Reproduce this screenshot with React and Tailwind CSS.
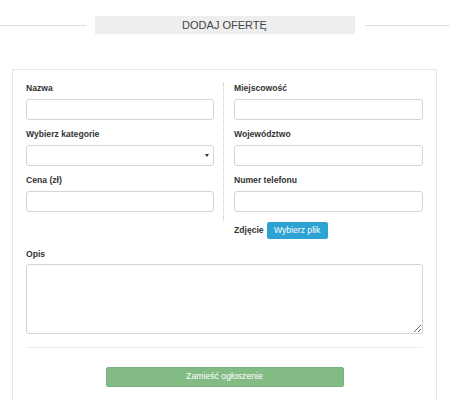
import { useState } from 'react';

function Field({ label, children, className = '' }) {
  return (
    <div className={`flex flex-col ${className}`}>
      <label className="h-[16px] leading-[16px] text-[8.6px] font-bold text-[#333] mb-[3px]">{label}</label>
      {children}
    </div>
  );
}

const inputCls = 'block h-[21px] w-full rounded-[3px] border border-[#d4d4d4] bg-white px-2 text-[9px] outline-none';

export default function App() {
  const [cat, setCat] = useState('');

  return (
    <div className="min-h-[400px] bg-white pt-[16px] font-['Liberation_Sans',Arial,sans-serif]">
      {/* Header */}
      <div className="flex items-center gap-[9px]">
        <div className="h-px flex-1 bg-[#dddddd]" />
        <div className="flex h-[18px] w-[260px] items-center justify-center bg-[#eeeeee] text-[11px] text-[#444]">
          DODAJ OFERTĘ
        </div>
        <div className="ml-[1px] h-px flex-1 bg-[#dddddd]" />
      </div>

      {/* Form card */}
      <div className="ml-[12px] mt-[35px] w-[425px] border border-[#e6e6e6] px-[13px] pt-[10px] pb-[20px]">
        <div className="flex">
          <div className="w-[188px]">
            <Field label="Nazwa" className="mb-[6px]">
              <input className={inputCls} />
            </Field>
            <Field label="Wybierz kategorie" className="mb-[6px]">
              <div className="relative h-[21px]">
                <select
                  value={cat}
                  onChange={(e) => setCat(e.target.value)}
                  className={`${inputCls} appearance-none`}
                >
                  <option value=""></option>
                </select>
                <span className="pointer-events-none absolute right-[5px] top-[9px] h-0 w-0 border-x-[2px] border-t-[3px] border-x-transparent border-t-[#333]" />
              </div>
            </Field>
            <Field label="Cena (zł)">
              <input className={inputCls} />
            </Field>
          </div>

          <div className="ml-[9px] mt-[3px] mb-[18px] w-0 border-l border-dotted border-[#c8c8c8]" />

          <div className="flex-1 pl-[10px]">
            <Field label="Miejscowość" className="mb-[6px]">
              <input className={inputCls} />
            </Field>
            <Field label="Województwo" className="mb-[6px]">
              <input className={inputCls} />
            </Field>
            <Field label="Numer telefonu">
              <input className={inputCls} />
            </Field>
            <div className="mt-[10px] flex items-center gap-[3px]">
              <span className="text-[8.6px] font-bold text-[#333]">Zdjęcie</span>
              <button className="h-[17px] w-[61px] rounded-[2px] bg-[#2da3d3] text-[8.6px] text-white">
                Wybierz plik
              </button>
            </div>
          </div>
        </div>

        <Field label="Opis" className="mt-[7px]">
          <textarea className="-mt-[1px] block h-[70px] w-full rounded-[3px] border border-[#d4d4d4] bg-white p-1 text-[9px] outline-none" />
        </Field>

        <div className="mt-[13px] h-px bg-[#eeeeee]" />

        <div className="mt-[19px] flex justify-center">
          <button className="h-[20px] w-[238px] rounded-[2px] border border-[#79b37a] bg-[#82bb84] text-[8.7px] text-white">
            Zamieść ogłoszenie
          </button>
        </div>
      </div>
    </div>
  );
}
